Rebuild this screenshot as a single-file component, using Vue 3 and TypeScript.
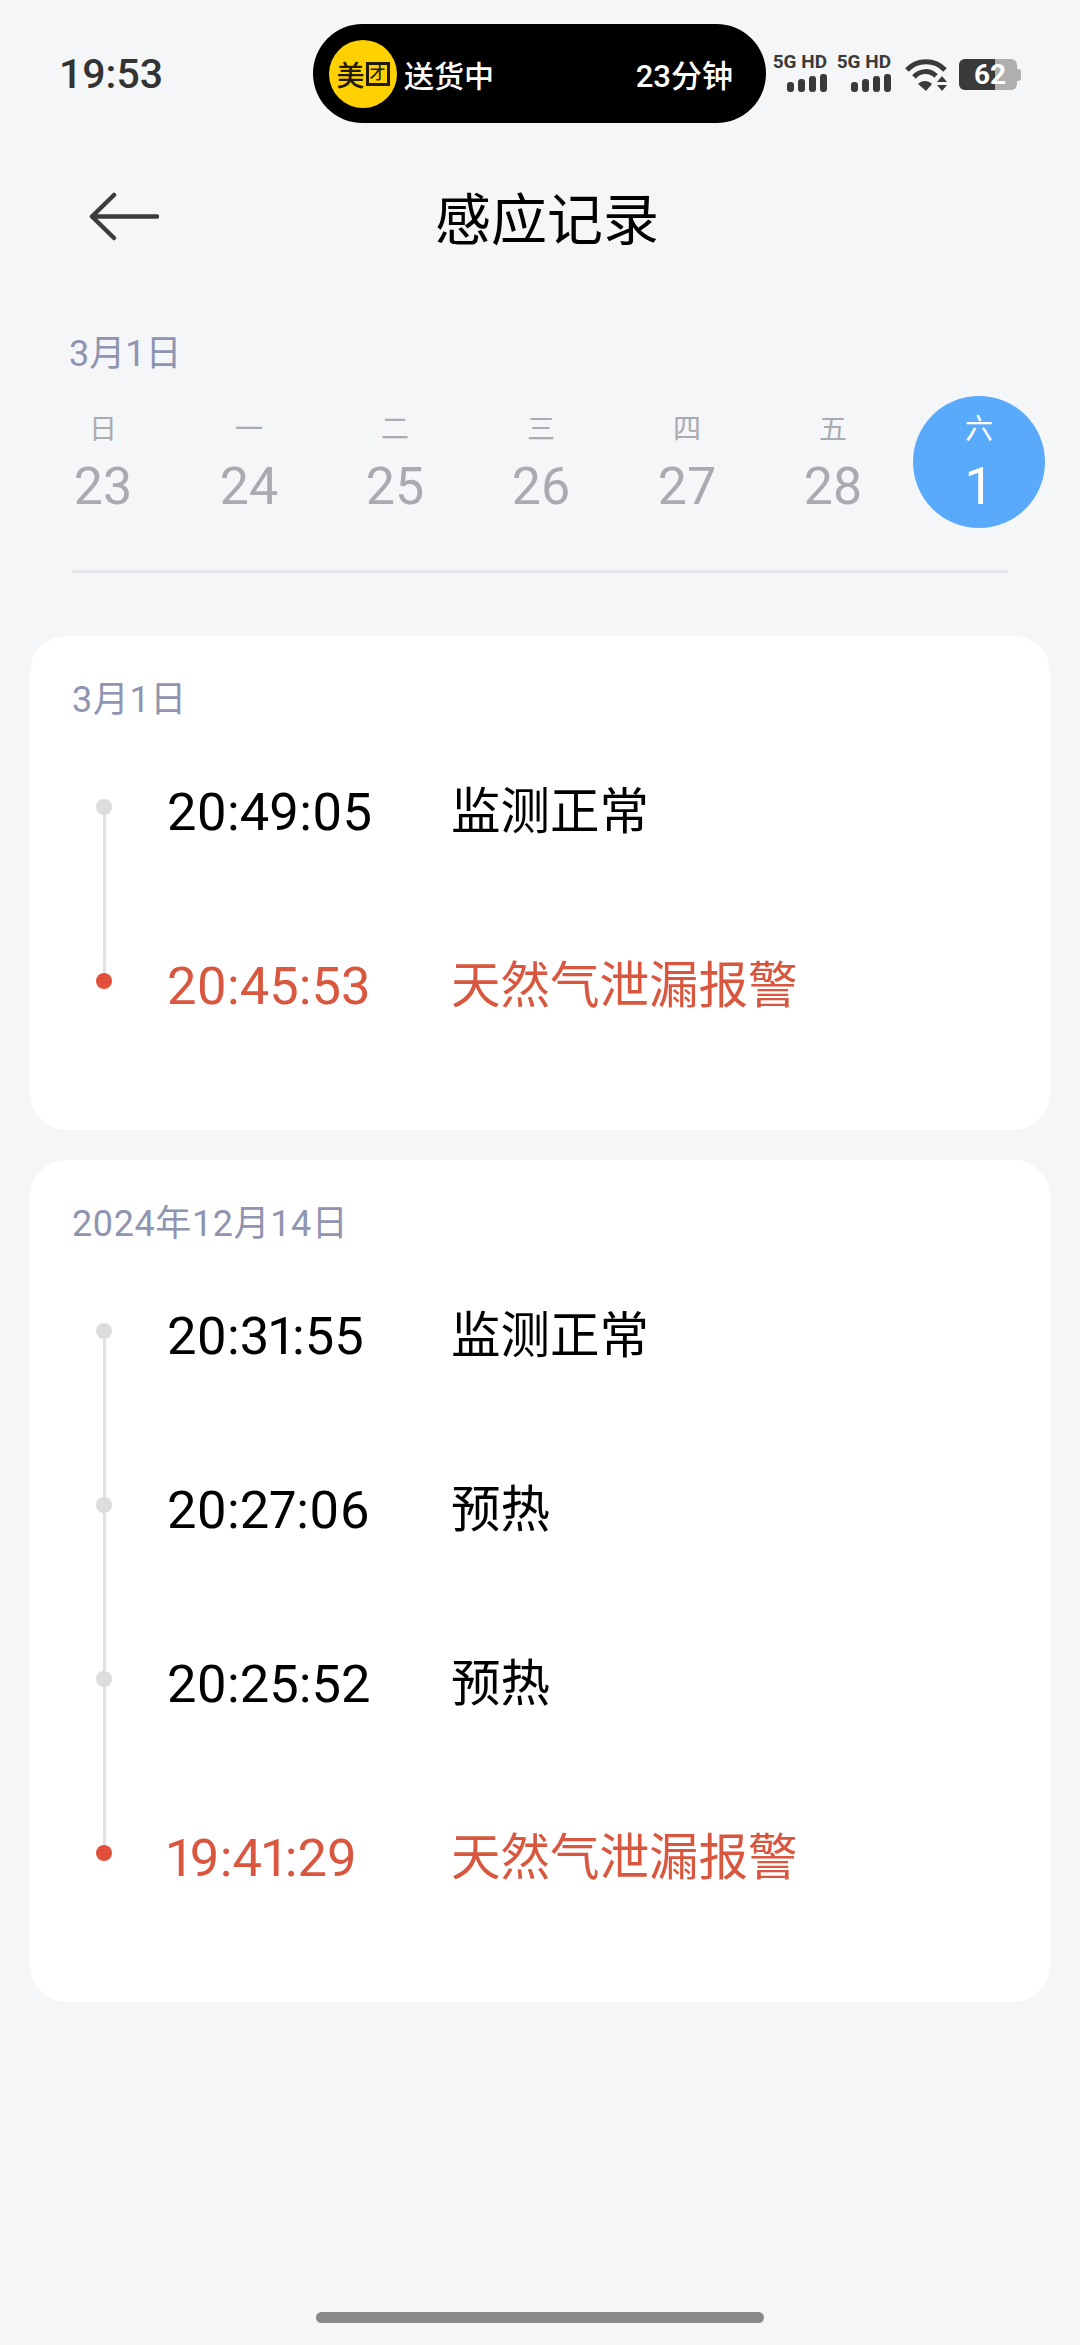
<script setup lang="ts">
interface LogRow {
  time: string
  text: string
  alarm?: boolean
}

interface LogGroup {
  date: string
  rows: LogRow[]
}

const week = [
  { label: '日', day: 23 },
  { label: '一', day: 24 },
  { label: '二', day: 25 },
  { label: '三', day: 26 },
  { label: '四', day: 27 },
  { label: '五', day: 28 },
  { label: '六', day: 1, active: true },
]

const groups: LogGroup[] = [
  {
    date: '3月1日',
    rows: [
      { time: '20:49:05', text: '监测正常' },
      { time: '20:45:53', text: '天然气泄漏报警', alarm: true },
    ],
  },
  {
    date: '2024年12月14日',
    rows: [
      { time: '20:31:55', text: '监测正常' },
      { time: '20:27:06', text: '预热' },
      { time: '20:25:52', text: '预热' },
      { time: '19:41:29', text: '天然气泄漏报警', alarm: true },
    ],
  },
]
</script>

<template>
  <div class="page">
    <div class="status">
      <span class="clock">19:53</span>
      <div class="pill">
        <span class="logo">美<span class="logo-box">才</span></span>
        <span class="pill-text">送货中</span>
        <span class="pill-eta">23分钟</span>
      </div>
      <div class="signal" v-for="n in 2" :key="n">
        <span class="net">5G HD</span>
        <svg width="40" height="18" viewBox="0 0 40 18">
          <rect x="0" y="8" width="7" height="10" rx="3" fill="#3a3a3a" />
          <rect x="11" y="5" width="7" height="13" rx="3" fill="#3a3a3a" />
          <rect x="22" y="2" width="7" height="16" rx="3" fill="#3a3a3a" />
          <rect x="33" y="0" width="7" height="18" rx="3" fill="#3a3a3a" />
        </svg>
      </div>
      <svg class="wifi" width="42" height="34" viewBox="0 0 42 34">
        <path d="M2 12C12 1 30 1 40 12" fill="none" stroke="#3a3a3a" stroke-width="5" />
        <path d="M9 19C15 12 25 12 31 18" fill="none" stroke="#3a3a3a" stroke-width="5" />
        <path d="M13 26L21 33L27 26C23 22 17 22 13 26Z" fill="#3a3a3a" />
        <path d="M37 18L42 24H32Z M32 27H42L37 33Z" fill="#3a3a3a" />
      </svg>
      <div class="battery">
        <div class="battery-body">
          <div class="battery-fill"></div>
          <span class="battery-num">62</span>
        </div>
        <div class="battery-nub"></div>
      </div>
    </div>

    <div class="nav">
      <svg class="back" width="70" height="50" viewBox="0 0 70 50">
        <path d="M25 3L3 24.500L25 46M3 24.500H68" fill="none" stroke="#3c3c3c" stroke-width="4.500" stroke-linecap="round" stroke-linejoin="round" />
      </svg>
      <span class="title">感应记录</span>
      <span></span>
    </div>

    <div class="current-date">3月1日</div>
    <div class="week">
      <div v-for="d in week" :key="d.label" class="day" :class="{ active: d.active }">
        <span class="day-label">{{ d.label }}</span>
        <span class="day-num">{{ d.day }}</span>
      </div>
    </div>
    <div class="divider"></div>

    <div class="card" v-for="group in groups" :key="group.date">
      <div class="card-date">{{ group.date }}</div>
      <div class="row" v-for="(row, i) in group.rows" :key="row.time" :class="{ alarm: row.alarm }">
        <div class="rail">
          <span class="dot"></span>
          <span class="line" v-if="i < group.rows.length - 1"></span>
        </div>
        <span class="time">{{ row.time }}</span>
        <span class="text">{{ row.text }}</span>
      </div>
    </div>

    <div class="home-bar"></div>
  </div>
</template>

<style>
html,
body {
  margin: 0;
  background: #f4f6f8;
}
</style>

<style scoped>
.page {
  position: relative;
  width: 1080px;
  height: 2345px;
  overflow: hidden;
  background: #f4f6f8;
  font-family: Roboto, "Noto Sans CJK SC", sans-serif;
  color: #000;
}

.status {
  display: flex;
  align-items: flex-start;
  height: 146px;
  padding-top: 24px;
  box-sizing: border-box;
}

.clock {
  width: 313px;
  padding-left: 59px;
  box-sizing: border-box;
  flex-shrink: 0;
  font-size: 41px;
  line-height: 50px;
  margin-top: 25px;
  font-weight: 500;
  color: #333;
}

.pill {
  width: 453px;
  height: 99px;
  border-radius: 50px;
  background: #000;
  display: flex;
  align-items: center;
  padding: 0 33px 0 16px;
  box-sizing: border-box;
  flex-shrink: 0;
  color: #fff;
  font-size: 30px;
  font-weight: 500;
}

.logo {
  width: 68px;
  height: 68px;
  border-radius: 50%;
  background: #ffd100;
  color: #1f1a00;
  font-size: 28px;
  font-weight: 500;
  display: flex;
  align-items: center;
  justify-content: center;
  white-space: nowrap;
  flex-shrink: 0;
}

.logo-box {
  width: 24px;
  height: 24px;
  box-sizing: border-box;
  border: 3px solid #1f1a00;
  font-size: 16px;
  line-height: 18px;
  text-align: center;
  margin-left: 1px;
}

.pill-text {
  margin-left: 7px;
}

.pill-eta {
  margin-left: auto;
  font-size: 31px;
}

.signal {
  width: 54px;
  margin-left: 7px;
  margin-top: 27px;
  display: flex;
  flex-direction: column;
  align-items: flex-end;
}

.signal + .signal {
  margin-left: 10px;
}

.net {
  font-size: 19px;
  line-height: 21px;
  font-weight: 700;
  color: #3a3a3a;
  white-space: nowrap;
  font-family: "Liberation Sans Narrow", Roboto, sans-serif;
}

.signal svg {
  margin-top: 2px;
}

.wifi {
  margin-left: 14px;
  margin-top: 34px;
}

.battery {
  display: flex;
  align-items: center;
  margin-left: 12px;
  margin-top: 35px;
}

.battery-body {
  position: relative;
  width: 58px;
  height: 31px;
  border-radius: 6px;
  background: #afafaf;
  overflow: hidden;
}

.battery-fill {
  width: 36px;
  height: 100%;
  background: #3a3a3a;
}

.battery-num {
  position: absolute;
  left: 15px;
  top: 0;
  color: #fff;
  font-size: 28px;
  line-height: 32px;
  font-weight: 700;
}

.battery-nub {
  width: 4px;
  height: 12px;
  border-radius: 0 3px 3px 0;
  background: #afafaf;
}

.nav {
  display: grid;
  grid-template-columns: 1fr auto 1fr;
  align-items: center;
  height: 148px;
  padding: 0 75px 0 89px;
}

.back {
  display: block;
  margin-top: -6px;
}

.title {
  font-size: 56px;
  line-height: 60px;
  font-weight: 400;
  margin-top: 2px;
}

.current-date {
  margin-top: 38px;
  padding-left: 69px;
  font-size: 36px;
  line-height: 44px;
  color: #8f94b0;
}

.week {
  display: grid;
  grid-template-columns: repeat(7, 146px);
  padding-left: 30px;
  margin-top: 20px;
}

.day {
  width: 132px;
  height: 132px;
  margin-left: 7px;
  border-radius: 50%;
  display: flex;
  flex-direction: column;
  align-items: center;
  color: #a9abb0;
}

.day.active {
  background: #5aaafc;
  color: #fff;
}

.day-label {
  font-size: 28px;
  line-height: 36px;
  margin-top: 16px;
}

.day-num {
  font-size: 52px;
  line-height: 60px;
  margin-top: 9px;
}

.divider {
  height: 3px;
  margin: 42px 72px 0;
  background: #e4e6e9;
}

.card {
  margin: 0 30px 30px;
  padding: 39px 42px 0;
  background: #fff;
  border-radius: 36px;
}

.divider + .card {
  margin-top: 63px;
}

.card-date {
  font-size: 36px;
  line-height: 50px;
  letter-spacing: 0.6px;
  color: #8f94b0;
  margin-bottom: 57px;
}

.row {
  display: flex;
  height: 174px;
  align-items: flex-start;
  font-size: 49.500px;
  line-height: 60px;
}

.rail {
  width: 16px;
  margin: 17px 0 -17px 24px;
  align-self: stretch;
  display: flex;
  flex-direction: column;
  align-items: center;
  flex-shrink: 0;
}

.dot {
  width: 16px;
  height: 16px;
  border-radius: 50%;
  background: #dcdcdc;
  flex-shrink: 0;
}

.line {
  width: 3px;
  flex: 1;
  background: #e2e2e2;
}

.time {
  width: 284px;
  margin-left: 55px;
  flex-shrink: 0;
  font-size: 52.500px;
  font-variant-numeric: proportional-nums;
}

.row.alarm {
  color: #d9563f;
}

.row.alarm .dot {
  background: #e2503c;
}

.home-bar {
  position: absolute;
  left: 316px;
  top: 2312px;
  width: 448px;
  height: 11px;
  border-radius: 6px;
  background: #8a8a8a;
}
</style>
